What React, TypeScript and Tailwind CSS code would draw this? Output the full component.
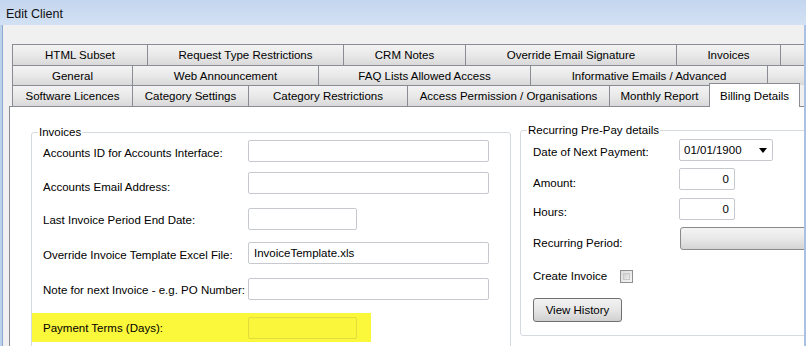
const tabRow1: [string, number][] = [
  ['HTML Subset', 136],
  ['Request Type Restrictions', 196],
  ['CRM Notes', 122],
  ['Override Email Signature', 211],
  ['Invoices', 104],
  ['', 80],
]

const tabRow2: [string, number][] = [
  ['General', 121],
  ['Web Announcement', 186],
  ['FAQ Lists Allowed Access', 212],
  ['Informative Emails / Advanced', 237],
  ['', 80],
]

const tabRow3: [string, number][] = [
  ['Software Licences', 121],
  ['Category Settings', 116],
  ['Category Restrictions', 159],
  ['Access Permission / Organisations', 202],
  ['Monthly Report', 100],
]

function TabRow({ tabs, height }: { tabs: [string, number][]; height: string }) {
  return (
    <div className={`flex shrink-0 ${height}`}>
      {tabs.map(([label, w], i) => (
        <div
          key={label + i}
          style={{ width: w }}
          className={`flex shrink-0 items-center justify-center border-t border-r border-[#898c95] bg-gradient-to-b from-[#f3f3f3] via-[#e9e9e9] to-[#d9d9d9] ${
            i === 0 ? 'border-l' : ''
          }`}
        >
          {label}
        </div>
      ))}
    </div>
  )
}

function TextBox({ width, value, align = 'left', yellow = false }: { width: string; value?: string; align?: 'left' | 'right'; yellow?: boolean }) {
  return (
    <div
      className={`flex h-[22px] shrink-0 items-center rounded-[2px] border px-[5px] ${width} ${
        yellow ? 'border-[#e2dd3c] bg-[#faf63c]' : 'border-[#c6c9ce] bg-white'
      } ${align === 'right' ? 'justify-end' : ''}`}
    >
      {value}
    </div>
  )
}

function InvoiceRow({ label, top, labelPad, input }: { label: string; top: string; labelPad: string; input: React.ReactNode }) {
  return (
    <div className={`flex h-[22px] items-center pl-[11px] ${top}`}>
      <div className={`w-[205px] shrink-0 ${labelPad}`}>{label}</div>
      {input}
    </div>
  )
}

export default function App() {
  return (
    <div className="flex h-[346px] w-[806px] flex-col overflow-hidden bg-[#f0f0f0] font-['Liberation_Sans',Arial,sans-serif] text-[11.5px] leading-[14px] text-black">
      {/* title bar */}
      <div className="flex h-[25px] shrink-0 items-center bg-gradient-to-b from-[#c3d6ef] to-[#d3e1f3] px-[6px] pt-[3px] text-[12.5px] text-[#111]">
        Edit Client
      </div>

      <div className="flex min-h-0 flex-1">
        <div className="w-[3px] shrink-0 border-r border-[#8ea9cf] bg-[#bcd1ec]" />

        <div className="flex min-w-0 flex-1 flex-col overflow-hidden pl-[6px] pt-[19px]">
          <div className="ml-[3px] flex flex-col">
            <TabRow tabs={tabRow1} height="h-[21px]" />
            <TabRow tabs={tabRow2} height="h-[20px]" />
            <div className="flex h-[21px] shrink-0 items-start">
              {tabRow3.map(([label, w], i) => (
                <div
                  key={label}
                  style={{ width: w }}
                  className={`flex h-[21px] shrink-0 items-center justify-center border-t border-r border-[#898c95] bg-gradient-to-b from-[#f3f3f3] via-[#e9e9e9] to-[#d9d9d9] ${
                    i === 0 ? 'border-l' : ''
                  }`}
                >
                  {label}
                </div>
              ))}
              <div className="relative z-10 -mt-[2px] -ml-[1px] flex h-[24px] w-[91px] shrink-0 items-center justify-center border-x border-t border-[#898c95] bg-white">
                Billing Details
              </div>
            </div>
          </div>

          {/* tab page */}
          <div className="flex min-h-0 flex-1 items-start gap-[9px] border-l border-t border-[#898c95] bg-white pl-[21px]">
            <fieldset className="mt-[18px] h-[260px] w-[480px] shrink-0 rounded-[3px] border border-[#d5dadf]">
              <legend className="ml-[6px] px-[1px] leading-[14px]">Invoices</legend>
              <InvoiceRow label="Accounts ID for Accounts Interface:" top="mt-[1px]" labelPad="pt-[4px]" input={<TextBox width="w-[241px]" />} />
              <InvoiceRow label="Accounts Email Address:" top="mt-[10px]" labelPad="pt-[7px]" input={<TextBox width="w-[241px]" />} />
              <InvoiceRow label="Last Invoice Period End Date:" top="mt-[14px]" labelPad="pt-[2px]" input={<TextBox width="w-[109px]" />} />
              <InvoiceRow
                label="Override Invoice Template Excel File:"
                top="mt-[12px]"
                labelPad="pt-[4px]"
                input={<TextBox width="w-[241px]" value="InvoiceTemplate.xls" />}
              />
              <InvoiceRow label="Note for next Invoice - e.g. PO Number:" top="mt-[14px]" labelPad="pt-[2px]" input={<TextBox width="w-[241px]" />} />
              <div className="mt-[13px] flex h-[29px] w-[339px] items-center bg-[#fbf73a] pl-[11px]">
                <div className="w-[205px] shrink-0 pt-[1px]">Payment Terms (Days):</div>
                <TextBox width="w-[109px]" yellow />
              </div>
            </fieldset>

            <fieldset className="mt-[16px] w-[320px] shrink-0 rounded-[3px] border border-[#d5dadf]">
              <legend className="ml-[6px] px-[1px] leading-[14px]">Recurring Pre-Pay details</legend>

              <div className="pb-[13px] pl-[12px]">
                <div className="mt-[2px] flex h-[22px] items-center">
                  <div className="w-[146px] shrink-0 pt-[4px]">Date of Next Payment:</div>
                  <div className="flex h-[22px] w-[94px] items-center justify-between rounded-[2px] border border-[#c6c9ce] bg-white pl-[4px] pr-[5px]">
                    <span>01/01/1900</span>
                    <svg width="8" height="5" viewBox="0 0 8 5">
                      <path d="M0 0h8L4 5z" fill="#000" />
                    </svg>
                  </div>
                </div>

                <div className="mt-[7px] flex h-[22px] items-center">
                  <div className="w-[146px] shrink-0 pt-[8px]">Amount:</div>
                  <TextBox width="w-[56px]" value="0" align="right" />
                </div>

                <div className="mt-[8px] flex h-[22px] items-center">
                  <div className="w-[146px] shrink-0 pt-[6px]">Hours:</div>
                  <TextBox width="w-[56px]" value="0" align="right" />
                </div>

                <div className="mt-[7px] flex h-[23px] items-center">
                  <div className="w-[147px] shrink-0 pt-[9px]">Recurring Period:</div>
                  <div className="h-[23px] flex-1 rounded-[3px] border border-[#8a8a8a] bg-gradient-to-b from-[#f4f4f4] via-[#e8e8e8] to-[#d4d4d4]" />
                </div>

                <div className="mt-[19px] flex h-[14px] items-center">
                  <span className="w-[87px] shrink-0">Create Invoice</span>
                  <div className="h-[13px] w-[13px] border border-[#8e8f8f] bg-gradient-to-br from-[#dcdcdc] to-[#f6f6f6] p-[2px]">
                    <div className="h-full w-full border border-[#c8c8c8] bg-gradient-to-br from-[#cfcfcf] to-[#eeeeee]" />
                  </div>
                </div>

                <button className="mt-[15px] flex h-[24px] w-[89px] items-center justify-center rounded-[3px] border border-[#707070] bg-gradient-to-b from-[#f2f2f2] via-[#e6e6e6] to-[#d0d0d0] text-[11.5px]">
                  View History
                </button>
              </div>
            </fieldset>
          </div>
        </div>

        <div className="w-[2px] shrink-0 bg-[#a9c2e4]" />
      </div>
    </div>
  )
}
